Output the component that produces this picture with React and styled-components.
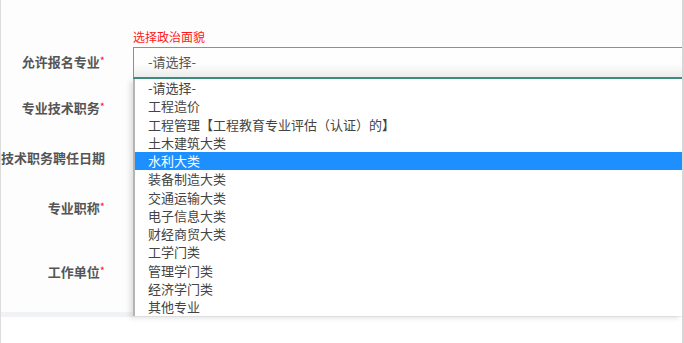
import React from "react";
import styled, { createGlobalStyle } from "styled-components";

const GlobalStyle = createGlobalStyle`
  html, body {
    margin: 0;
    padding: 0;
    background: #ffffff;
  }
  body {
    font-family: "Noto Sans CJK SC", "Liberation Sans", sans-serif;
  }
`;

const options = [
  "-请选择-",
  "工程造价",
  "工程管理【工程教育专业评估（认证）的】",
  "土木建筑大类",
  "水利大类",
  "装备制造大类",
  "交通运输大类",
  "电子信息大类",
  "财经商贸大类",
  "工学门类",
  "管理学门类",
  "经济学门类",
  "其他专业",
];

const rows = [
  { label: "专业技术职务", required: true, top: 14 },
  { label: "专业技术职务聘任日期", required: false, top: 18 },
  { label: "专业职称", required: true, top: 18 },
  { label: "工作单位", required: true, top: 32 },
];

const App = () => {
  return (
    <>
      <GlobalStyle />
      <Page>
        <Form>
          <Hint>选择政治面貌</Hint>
          <FormRow $top={0}>
            <Label>
              <LabelText>
                允许报名专业<Star>*</Star>
              </LabelText>
            </Label>
            <Field>
              <Select>-请选择-</Select>
              <Dropdown>
                {options.map((o, i) => (
                  <Option key={o} $active={i === 4}>
                    {o}
                  </Option>
                ))}
              </Dropdown>
            </Field>
          </FormRow>
          {rows.map((r) => (
            <FormRow key={r.label} $top={r.top}>
              <Label>
                <LabelText>
                  {r.label}
                  {r.required && <Star>*</Star>}
                </LabelText>
              </Label>
            </FormRow>
          ))}
        </Form>
        <BottomStrip />
      </Page>
    </>
  );
};

const Page = styled.div`
  width: 681px;
  height: 343px;
  border-left: 1px solid #dcdcdc;
  border-right: 2px solid #d6d6d6;
  background: #ffffff;
  overflow: hidden;
  display: flex;
  flex-direction: column;
`;

const Form = styled.div`
  height: 312px;
  padding-top: 29px;
  box-sizing: border-box;
  background: #fdfdfd;
  display: flex;
  flex-direction: column;
`;

const Hint = styled.div`
  margin-left: 132px;
  height: 18px;
  font-size: 12px;
  line-height: 15px;
  color: #ff1a1a;
`;

const FormRow = styled.div`
  display: flex;
  align-items: center;
  height: 32px;
  margin-top: ${(p) => p.$top}px;
`;

const Label = styled.div`
  width: 104px;
  flex-shrink: 0;
  display: flex;
  justify-content: flex-end;
  margin-right: 28px;
  margin-top: -3px;
`;

const LabelText = styled.span`
  white-space: nowrap;
  font-size: 13px;
  font-weight: bold;
  color: #555555;
`;

const Star = styled.span`
  color: #ff2020;
  font-size: 11px;
  vertical-align: top;
  font-weight: normal;
`;

const Field = styled.div`
  position: relative;
  flex: 1;
  height: 32px;
`;

const Select = styled.div`
  height: 32px;
  box-sizing: border-box;
  border: 1px solid #45b39a;
  border-right: none;
  border-bottom: 2px solid #3c8f80;
  background: linear-gradient(#ffffff 0%, #fdfdfd 55%, #ececec 100%);
  padding-left: 14px;
  font-size: 13px;
  line-height: 28px;
  color: #555555;
`;

const Dropdown = styled.div`
  position: absolute;
  top: 32px;
  left: 0;
  right: 0;
  background: #ffffff;
  border-left: 2px solid #b4b4b4;
  box-shadow: -3px 2px 5px rgba(0, 0, 0, 0.12);
  z-index: 2;
`;

const Option = styled.div`
  height: 18.25px;
  line-height: 18px;
  padding-left: 13px;
  font-size: 13px;
  white-space: nowrap;
  color: ${(p) => (p.$active ? "#ffffff" : "#444444")};
  background: ${(p) => (p.$active ? "#1e8fff" : "transparent")};
`;

const BottomStrip = styled.div`
  height: 5px;
  background: #f1f2f5;
`;

export default App;
